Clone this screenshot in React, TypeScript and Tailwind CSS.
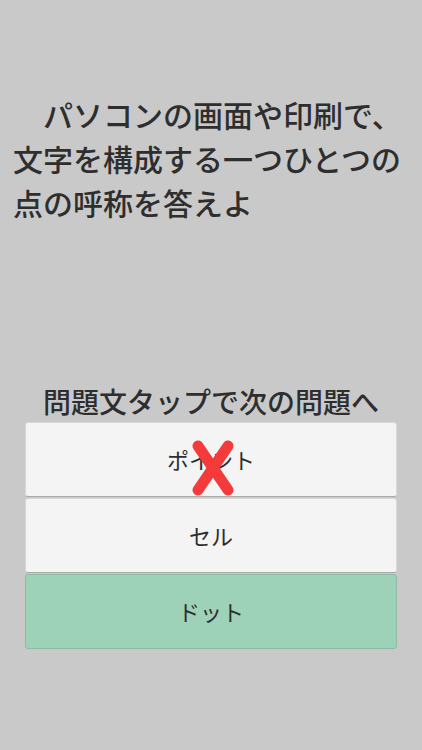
import React from "react";

const font = {
  fontFamily: '"Noto Sans CJK JP", "Noto Sans", sans-serif',
};

const choices = [
  { label: "ポイント", wrong: true },
  { label: "セル" },
  { label: "ドット", correct: true },
];

const App: React.FC = () => {
  return (
    <div className="min-h-[750px] w-full bg-[#c9c9c9] text-[#2e2e2e]" style={font}>
      {/* Question */}
      <div className="px-[13px] pt-[92px]">
        <p className="text-[30px] font-medium leading-[44px]">
          {"\u3000パソコンの画面や印刷で、文字を構成する一つひとつの点の呼称を答えよ"}
        </p>
      </div>

      <p className="mt-[159px] mb-[3px] text-center text-[28px] font-medium leading-[36px]">
        問題文タップで次の問題へ
      </p>

      <div className="mx-[25px] flex flex-col gap-[1px]">
        {choices.map((c) => (
          <div
            key={c.label}
            className={`relative flex h-[75px] items-center justify-center rounded-[3px] border text-[22px] ${
              c.correct
                ? "border-[#8fbba5] bg-[#9ed2b8]"
                : "border-[#d8d8d8] border-b-[#a9a9a9] bg-[#f4f4f4]"
            }`}
          >
            <span>{c.label}</span>
            {c.wrong && (
              <svg
                className="absolute left-[165px] top-[17px]"
                width="44"
                height="56"
                viewBox="0 0 44 56"
              >
                <path
                  d="M7 6 L37 50 M37 6 L7 50"
                  stroke="#f43a3a"
                  strokeWidth="11"
                  strokeLinecap="round"
                  fill="none"
                />
              </svg>
            )}
          </div>
        ))}
      </div>
    </div>
  );
};

export default App;
